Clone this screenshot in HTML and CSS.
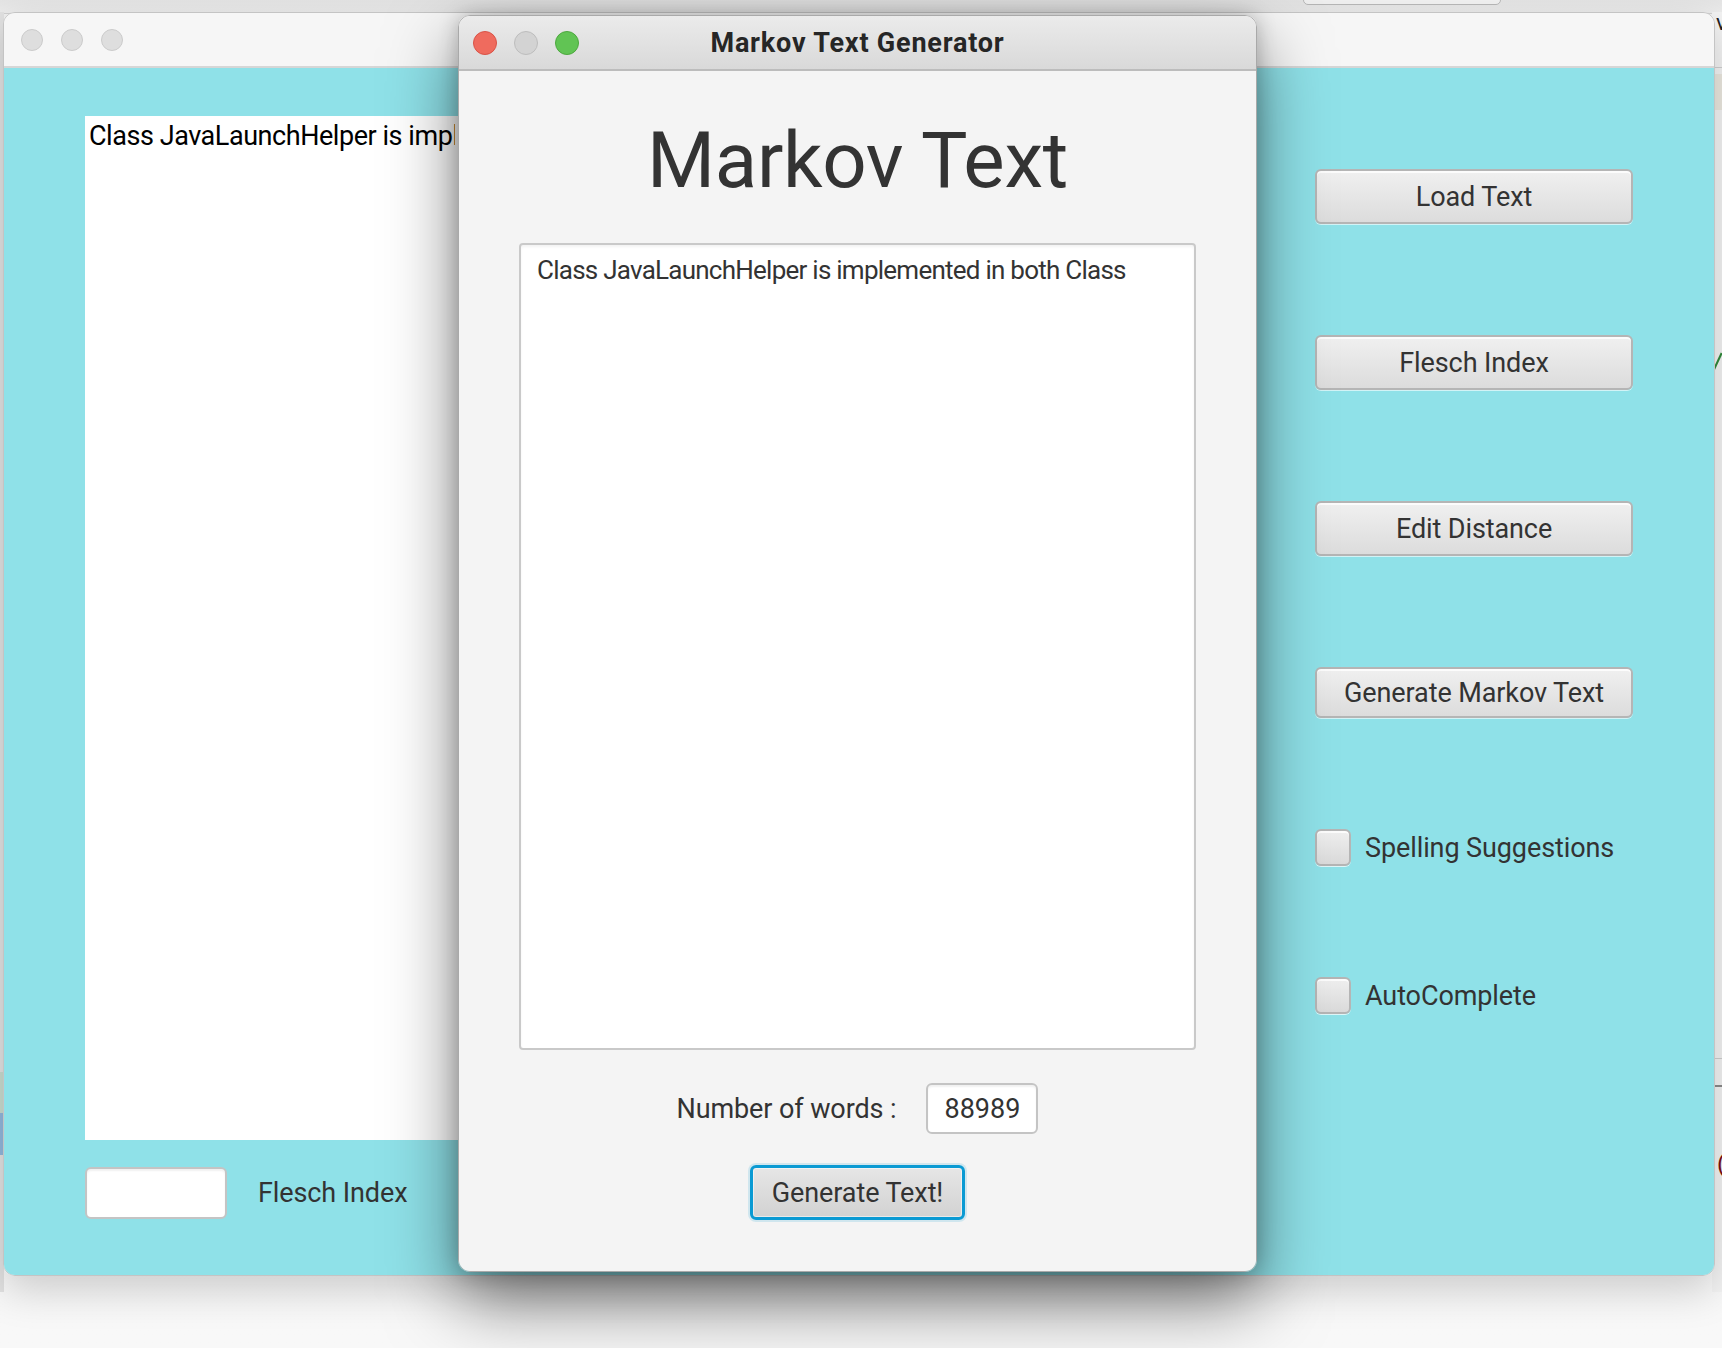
FILE: index.html
```html
<!DOCTYPE html>
<html lang="en">
<head>
<meta charset="utf-8">
<title>Markov Text Generator</title>
<link rel="stylesheet" href="styles.css">
</head>
<body>
<div class="desktop">
  <div class="top-strip"><div class="top-field"></div></div>
  <div class="edge-left">
    <span class="edge-bit green"></span>
    <span class="edge-bit blue"></span>
  </div>
  <div class="edge-right">
    <span class="edge-v">v</span>
    <span class="edge-line l1"></span>
    <span class="edge-hl"></span>
    <span class="edge-slash"></span>
    <span class="edge-line l2"></span>
    <span class="edge-line l3"></span>
    <span class="edge-paren">(</span>
  </div>

  <section class="window back-window">
    <header class="titlebar back-titlebar">
      <div class="lights">
        <span class="light grey"></span>
        <span class="light grey"></span>
        <span class="light grey"></span>
      </div>
    </header>
    <div class="back-content">
      <div class="left-col">
        <div class="plain-area"><span class="plain-text">Class JavaLaunchHelper is implemented in both Class</span></div>
        <div class="bottom-row">
          <div class="text-field small-field"></div>
          <span class="label">Flesch Index</span>
        </div>
      </div>
      <div class="right-col">
        <button class="fx-button side-button">Load Text</button>
        <button class="fx-button side-button">Flesch Index</button>
        <button class="fx-button side-button">Edit Distance</button>
        <button class="fx-button side-button short">Generate Markov Text</button>
        <label class="check-row"><span class="check-box"></span><span class="label">Spelling Suggestions</span></label>
        <label class="check-row"><span class="check-box"></span><span class="label">AutoComplete</span></label>
      </div>
    </div>
  </section>

  <section class="window front-window">
    <header class="titlebar front-titlebar">
      <div class="lights">
        <span class="light red"></span>
        <span class="light grey-active"></span>
        <span class="light green"></span>
      </div>
      <h1 class="window-title">Markov Text Generator</h1>
    </header>
    <div class="front-content">
      <h2 class="big-title">Markov Text</h2>
      <div class="text-area">Class JavaLaunchHelper is implemented in both Class</div>
      <div class="words-row">
        <span class="label">Number of words :</span>
        <div class="text-field num-field">88989</div>
      </div>
      <button class="fx-button gen-button">Generate Text!</button>
    </div>
  </section>
</div>
</body>
</html>
```

FILE: styles.css
```css
* { box-sizing: border-box; }

html, body {
  margin: 0;
  padding: 0;
  width: 1722px;
  height: 1348px;
  overflow: hidden;
}

body {
  font-family: Roboto, "Noto Sans", sans-serif;
  color: #333;
  background: #f6f6f6;
}

.desktop {
  position: relative;
  width: 1722px;
  height: 1348px;
  background: linear-gradient(#f0f0f0, #f7f7f7 60%, #f8f8f8);
  overflow: hidden;
}

/* background pieces of other apps */
.top-strip {
  position: absolute;
  left: 0; top: 0;
  width: 1722px; height: 14px;
  background: linear-gradient(#e4e4e4, #ececec);
  border-bottom: 1px solid #d0d0d0;
}
.top-field {
  position: absolute;
  left: 1303px; top: -10px;
  width: 198px; height: 15px;
  background: #f2f2f2;
  border: 1px solid #b9b9b9;
  border-radius: 5px;
}
.edge-left {
  position: absolute;
  left: 0; top: 12px;
  width: 4px; height: 1280px;
  background: #e2e2e2;
}
.edge-bit { position: absolute; left: 0; width: 3px; }
.edge-bit.green { top: 1060px; height: 41px; background: #c9dccf; }
.edge-bit.blue { top: 1101px; height: 42px; background: #92b8dd; }

.edge-right {
  position: absolute;
  left: 1712px; top: 12px;
  width: 10px; height: 1280px;
  background: #f3f3f3;
}
.edge-v {
  position: absolute; left: 4px; top: 0px;
  font-size: 22px; color: #222; line-height: 1;
}
.edge-line { position: absolute; left: 0; width: 10px; height: 1px; background: #cfcfcf; }
.edge-line.l1 { top: 55px; }
.edge-line.l2 { top: 1046px; }
.edge-line.l3 { top: 1073px; background: #8a8a8a; height: 2px; }
.edge-hl { position: absolute; left: 0; top: 62px; width: 10px; height: 36px; background: #ebe8df; }
.edge-slash {
  position: absolute; left: 4px; top: 340px;
  width: 2px; height: 22px; background: #2f8a3a;
  transform: rotate(25deg);
}
.edge-paren {
  position: absolute; left: 5px; top: 1140px;
  font-size: 24px; color: #7a1010; line-height: 1;
}

/* windows */
.window {
  position: absolute;
  display: flex;
  flex-direction: column;
  border-radius: 12px;
  overflow: hidden;
}

.back-window {
  left: 3px; top: 12px;
  width: 1712px; height: 1264px;
  border: 1px solid #c4c4c4;
  box-shadow: 0 14px 40px rgba(0, 0, 0, 0.18);
}

.front-window {
  left: 458px; top: 15px;
  width: 799px; height: 1257px;
  border: 1px solid #a9a9a9;
  box-shadow: 0 30px 70px rgba(0, 0, 0, 0.5), 0 0 20px rgba(0, 0, 0, 0.22);
}

.titlebar {
  position: relative;
  flex: 0 0 auto;
  height: 55px;
  display: flex;
  align-items: center;
  padding-left: 16px;
}

.back-titlebar {
  background: #f6f6f6;
  border-bottom: 2px solid #d6d6d6;
  padding-left: 17px;
}

.front-titlebar {
  background: linear-gradient(#ebebeb, #d9d9d9);
  border-bottom: 2px solid #bcbcbc;
  padding-left: 14px;
}

.lights { display: flex; gap: 17px; }
.back-titlebar .lights { gap: 18px; }

.light {
  width: 24px; height: 24px;
  border-radius: 50%;
  display: block;
}
.back-titlebar .light { width: 22px; height: 22px; }
.light.grey { background: #dedede; border: 1px solid #cbcbcb; }
.light.grey-active { background: #d3d3d3; border: 1px solid #bdbdbd; }
.light.red { background: #ef6b5e; border: 1px solid #d95347; }
.light.green { background: #61c454; border: 1px solid #4da83f; }

.window-title {
  position: absolute;
  left: 0; right: 0; top: 0;
  margin: 0;
  height: 55px;
  line-height: 55px;
  text-align: center;
  font-size: 27px;
  font-weight: 700;
  letter-spacing: 0.8px;
  color: #262626;
}

/* back window content */
.back-content {
  flex: 1 1 auto;
  background: #8fe1e8;
  display: flex;
  padding: 48px 81px 0 81px;
  gap: 85px;
}

.left-col {
  flex: 1 1 auto;
  display: flex;
  flex-direction: column;
}

.plain-area {
  height: 1024px;
  background: #fff;
  color: #000;
  font-size: 27px;
  padding: 4px 4px;
  line-height: 32px;
  white-space: nowrap;
  overflow: hidden;
  letter-spacing: -0.45px;
}

.plain-text {
  display: block;
  width: 366px;
  overflow: hidden;
}

.bottom-row {
  display: flex;
  align-items: center;
  gap: 31px;
  margin-top: 27px;
}

.label {
  font-size: 27px;
  color: #333;
  letter-spacing: -0.1px;
  white-space: nowrap;
}

.text-field {
  background: #fff;
  border: 2px solid #c4c4c4;
  border-radius: 6px;
  box-shadow: inset 0 2px 2px rgba(0, 0, 0, 0.06);
}

.small-field { width: 142px; height: 52px; }

.right-col {
  flex: 0 0 318px;
  display: flex;
  flex-direction: column;
  gap: 111px;
  padding-top: 53px;
}

.fx-button {
  font-family: inherit;
  font-size: 27px;
  color: #333;
  letter-spacing: -0.1px;
  background: linear-gradient(#f0f0f0, #dcdcdc);
  border: 2px solid #b5b5b5;
  border-radius: 6px;
  box-shadow: inset 0 2px 0 rgba(255, 255, 255, 0.8), 0 1px 0 rgba(255, 255, 255, 0.6);
  padding: 0;
  cursor: default;
}

.side-button { width: 318px; height: 55px; }
.side-button.short { height: 51px; }

.check-row {
  display: flex;
  align-items: center;
  gap: 14px;
}

.check-box {
  width: 36px; height: 37px;
  border: 2px solid #b5b5b5;
  border-radius: 6px;
  background: linear-gradient(#efefef, #dadada);
  box-shadow: inset 0 2px 0 rgba(255, 255, 255, 0.8), 0 1px 0 rgba(255, 255, 255, 0.7);
}

/* front window content */
.front-content {
  flex: 1 1 auto;
  background: #f4f4f4;
  display: flex;
  flex-direction: column;
  align-items: center;
  padding: 48px 60px 0 60px;
}

.big-title {
  margin: 0;
  font-size: 78px;
  font-weight: 400;
  line-height: 84px;
  color: #333;
  letter-spacing: -0.3px;
}

.text-area {
  margin-top: 40px;
  align-self: stretch;
  height: 807px;
  background: #fff;
  border: 2px solid #c9c9c9;
  border-radius: 4px;
  padding: 10px 16px;
  font-size: 26px;
  line-height: 30px;
  color: #333;
  letter-spacing: -0.75px;
  box-shadow: inset 0 2px 3px rgba(0, 0, 0, 0.05);
}

.words-row {
  display: flex;
  align-items: center;
  gap: 30px;
  margin-top: 33px;
}

.num-field {
  width: 112px; height: 51px;
  display: flex;
  align-items: center;
  justify-content: center;
  font-size: 27px;
  color: #333;
}

.gen-button {
  margin-top: 31px;
  width: 215px;
  height: 55px;
  border: 3px solid #0a9ad3;
  background: linear-gradient(#e6e6e6, #d2d2d2);
  box-shadow: 0 0 0 2px rgba(10, 154, 211, 0.15), inset 0 0 0 1px rgba(255, 255, 255, 0.5);
}
```
